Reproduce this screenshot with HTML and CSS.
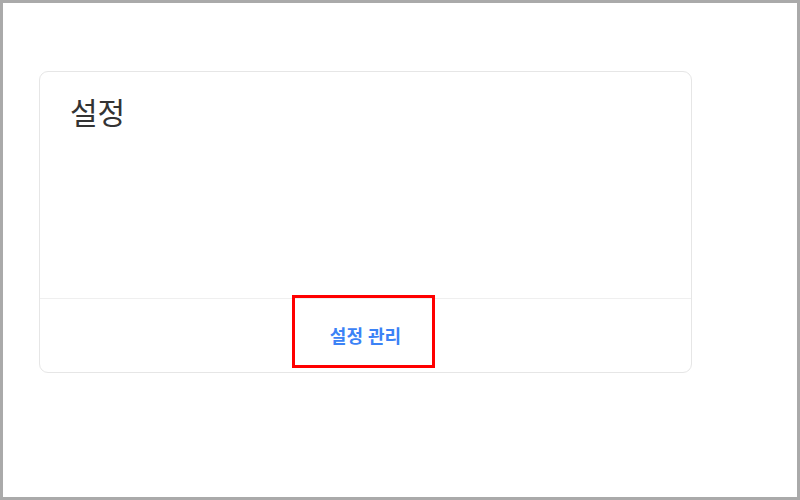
FILE: index.html
```html
<!DOCTYPE html>
<html lang="ko">
<head>
    <meta charset="UTF-8">
    <meta name="viewport" content="width=device-width, initial-scale=1.0">
    <title>설정</title>
    <link rel="stylesheet" href="styles.css">
</head>
<body>
    <div class="frame">
        <div class="card">
            <div class="card-body">
                <h2 class="card-title">설정</h2>
            </div>
            <div class="card-footer">
                <a href="#" class="manage-link">설정 관리</a>
                <div class="highlight"></div>
            </div>
        </div>
    </div>
</body>
</html>
```

FILE: styles.css
```css
* {
    box-sizing: border-box;
}

body {
    margin: 0;
    font-family: "Noto Sans CJK KR", "Noto Sans", sans-serif;
    background-color: #fff;
}

.frame {
    width: 800px;
    height: 500px;
    border: 3px solid #aaa;
    background-color: #fff;
    padding: 68px 0 0 36px;
}

.card {
    width: 653px;
    height: 302px;
    border: 1px solid #e6e6e6;
    border-radius: 9px;
    display: flex;
    flex-direction: column;
}

.card-body {
    flex: 1;
    padding: 21px 30px;
}

.card-title {
    margin: 0;
    font-size: 30px;
    font-weight: 400;
    line-height: 36px;
    color: #333;
}

.card-footer {
    position: relative;
    height: 74px;
    border-top: 1px solid #efefef;
    display: flex;
    justify-content: center;
    align-items: center;
}

.manage-link {
    font-size: 18px;
    font-weight: 600;
    color: #3b82f6;
    text-decoration: none;
    margin-top: -2px;
}

.highlight {
    position: absolute;
    top: -4px;
    left: 252px;
    width: 143px;
    height: 73px;
    border: 3px solid #ff0000;
}
```
